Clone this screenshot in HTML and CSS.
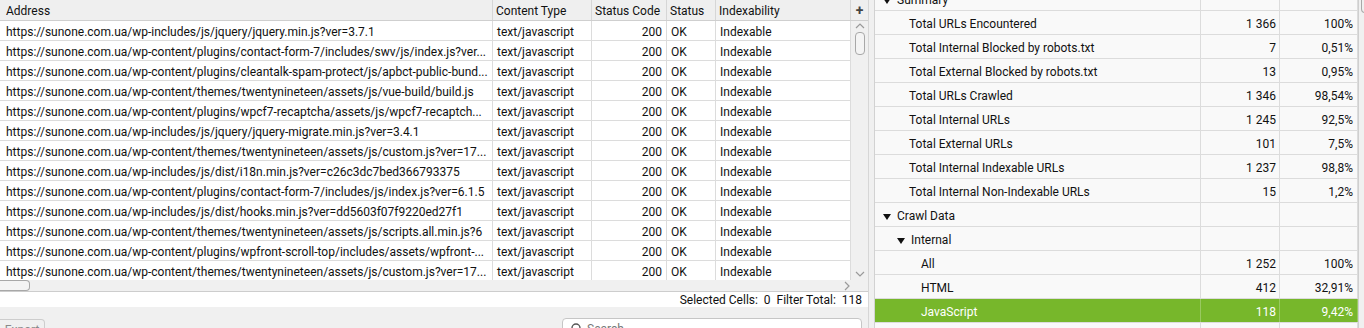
FILE: index.html
```html
<!DOCTYPE html>
<html lang="en">
<head>
  <meta charset="UTF-8">
  <title>Crawl results</title>
  <link rel="stylesheet" href="styles.css">
</head>
<body>
  <div class="app">
    <div class="left">
      <div class="grid-head">
        <div class="th">Address</div>
        <div class="th">Content Type</div>
        <div class="th">Status Code</div>
        <div class="th">Status</div>
        <div class="th">Indexability</div>
        <div class="th th-add">+</div>
      </div>

      <div class="grid-body">
        <div class="rows">
          <div class="row"><div class="td">https://sunone.com.ua/wp-includes/js/jquery/jquery.min.js?ver=3.7.1</div><div class="td">text/javascript</div><div class="td num">200</div><div class="td">OK</div><div class="td">Indexable</div></div>
          <div class="row"><div class="td">https://sunone.com.ua/wp-content/plugins/contact-form-7/includes/swv/js/index.js?ver...</div><div class="td">text/javascript</div><div class="td num">200</div><div class="td">OK</div><div class="td">Indexable</div></div>
          <div class="row"><div class="td">https://sunone.com.ua/wp-content/plugins/cleantalk-spam-protect/js/apbct-public-bund...</div><div class="td">text/javascript</div><div class="td num">200</div><div class="td">OK</div><div class="td">Indexable</div></div>
          <div class="row"><div class="td">https://sunone.com.ua/wp-content/themes/twentynineteen/assets/js/vue-build/build.js</div><div class="td">text/javascript</div><div class="td num">200</div><div class="td">OK</div><div class="td">Indexable</div></div>
          <div class="row"><div class="td">https://sunone.com.ua/wp-content/plugins/wpcf7-recaptcha/assets/js/wpcf7-recaptch...</div><div class="td">text/javascript</div><div class="td num">200</div><div class="td">OK</div><div class="td">Indexable</div></div>
          <div class="row"><div class="td">https://sunone.com.ua/wp-includes/js/jquery/jquery-migrate.min.js?ver=3.4.1</div><div class="td">text/javascript</div><div class="td num">200</div><div class="td">OK</div><div class="td">Indexable</div></div>
          <div class="row"><div class="td">https://sunone.com.ua/wp-content/themes/twentynineteen/assets/js/custom.js?ver=17...</div><div class="td">text/javascript</div><div class="td num">200</div><div class="td">OK</div><div class="td">Indexable</div></div>
          <div class="row"><div class="td">https://sunone.com.ua/wp-includes/js/dist/i18n.min.js?ver=c26c3dc7bed366793375</div><div class="td">text/javascript</div><div class="td num">200</div><div class="td">OK</div><div class="td">Indexable</div></div>
          <div class="row"><div class="td">https://sunone.com.ua/wp-content/plugins/contact-form-7/includes/js/index.js?ver=6.1.5</div><div class="td">text/javascript</div><div class="td num">200</div><div class="td">OK</div><div class="td">Indexable</div></div>
          <div class="row"><div class="td">https://sunone.com.ua/wp-includes/js/dist/hooks.min.js?ver=dd5603f07f9220ed27f1</div><div class="td">text/javascript</div><div class="td num">200</div><div class="td">OK</div><div class="td">Indexable</div></div>
          <div class="row"><div class="td">https://sunone.com.ua/wp-content/themes/twentynineteen/assets/js/scripts.all.min.js?6</div><div class="td">text/javascript</div><div class="td num">200</div><div class="td">OK</div><div class="td">Indexable</div></div>
          <div class="row"><div class="td">https://sunone.com.ua/wp-content/plugins/wpfront-scroll-top/includes/assets/wpfront-...</div><div class="td">text/javascript</div><div class="td num">200</div><div class="td">OK</div><div class="td">Indexable</div></div>
          <div class="row"><div class="td">https://sunone.com.ua/wp-content/themes/twentynineteen/assets/js/custom.js?ver=17...</div><div class="td">text/javascript</div><div class="td num">200</div><div class="td">OK</div><div class="td">Indexable</div></div>
        </div>
        <div class="vscroll">
          <svg class="chev" width="10" height="6" viewBox="0 0 10 6"><polyline points="1,5 5,1 9,5" fill="none" stroke="#9a9a9a" stroke-width="1.2"/></svg>
          <div class="vthumb"></div>
          <div class="vspace"></div>
          <svg class="chev" width="10" height="6" viewBox="0 0 10 6"><polyline points="1,1 5,5 9,1" fill="none" stroke="#9a9a9a" stroke-width="1.2"/></svg>
        </div>
      </div>

      <div class="hscroll">
        <div class="hthumb"></div>
        <svg class="chev-r" width="6" height="10" viewBox="0 0 6 10"><polyline points="1,1 5,5 1,9" fill="none" stroke="#9a9a9a" stroke-width="1.2"/></svg>
        <div class="corner"></div>
      </div>

      <div class="status-bar">Selected Cells:&nbsp; 0&nbsp; Filter Total:&nbsp; 118</div>

      <div class="bottom-bar">
        <button class="btn-export">Export</button>
        <div class="search">
          <svg width="12" height="12" viewBox="0 0 12 12"><circle cx="5" cy="5" r="4" fill="none" stroke="#555" stroke-width="1.4"/><line x1="8" y1="8" x2="11" y2="11" stroke="#555" stroke-width="1.4"/></svg>
          <span class="search-text">Search...</span>
          <span class="search-opt"></span>
        </div>
      </div>
    </div>

    <div class="splitter"></div>

    <div class="right">
      <div class="tree">
        <div class="trow">
          <div class="tc name lvl0"><svg class="tri" width="8" height="6" viewBox="0 0 8 6"><polygon points="0,0 8,0 4,6" fill="#111"/></svg>Summary</div>
          <div class="tc"></div><div class="tc"></div>
        </div>
        <div class="trow"><div class="tc name lvl1">Total URLs Encountered</div><div class="tc num">1 366</div><div class="tc num">100%</div></div>
        <div class="trow"><div class="tc name lvl1">Total Internal Blocked by robots.txt</div><div class="tc num">7</div><div class="tc num">0,51%</div></div>
        <div class="trow"><div class="tc name lvl1">Total External Blocked by robots.txt</div><div class="tc num">13</div><div class="tc num">0,95%</div></div>
        <div class="trow"><div class="tc name lvl1">Total URLs Crawled</div><div class="tc num">1 346</div><div class="tc num">98,54%</div></div>
        <div class="trow"><div class="tc name lvl1">Total Internal URLs</div><div class="tc num">1 245</div><div class="tc num">92,5%</div></div>
        <div class="trow"><div class="tc name lvl1">Total External URLs</div><div class="tc num">101</div><div class="tc num">7,5%</div></div>
        <div class="trow"><div class="tc name lvl1">Total Internal Indexable URLs</div><div class="tc num">1 237</div><div class="tc num">98,8%</div></div>
        <div class="trow"><div class="tc name lvl1">Total Internal Non-Indexable URLs</div><div class="tc num">15</div><div class="tc num">1,2%</div></div>
        <div class="trow">
          <div class="tc name lvl0"><svg class="tri" width="8" height="6" viewBox="0 0 8 6"><polygon points="0,0 8,0 4,6" fill="#111"/></svg>Crawl Data</div>
          <div class="tc"></div><div class="tc"></div>
        </div>
        <div class="trow">
          <div class="tc name lvl1a"><svg class="tri" width="8" height="6" viewBox="0 0 8 6"><polygon points="0,0 8,0 4,6" fill="#111"/></svg>Internal</div>
          <div class="tc"></div><div class="tc"></div>
        </div>
        <div class="trow"><div class="tc name lvl2">All</div><div class="tc num">1 252</div><div class="tc num">100%</div></div>
        <div class="trow"><div class="tc name lvl2">HTML</div><div class="tc num">412</div><div class="tc num">32,91%</div></div>
        <div class="trow selected"><div class="tc name lvl2">JavaScript</div><div class="tc num">118</div><div class="tc num">9,42%</div></div>
        <div class="trow"><div class="tc name lvl2"></div><div class="tc"></div><div class="tc"></div></div>
      </div>
      <div class="rscroll"><div class="rthumb"></div></div>
    </div>
  </div>
</body>
</html>
```

FILE: styles.css
```css
:root {
  --panel-bg: #f0f0f0;
  --line: #dcdcdc;
  --head-line: #cfcfcf;
  --text: #111;
  --green: #77b72b;
}

* {
  box-sizing: border-box;
  margin: 0;
  padding: 0;
}

body {
  font-family: Roboto, 'Liberation Sans', sans-serif;
  font-size: 12px;
  color: var(--text);
  background-color: var(--panel-bg);
  width: 1364px;
  height: 328px;
  overflow: hidden;
}

.app {
  display: flex;
  height: 328px;
}

/* left: url table */

.left {
  width: 868px;
  display: flex;
  flex-direction: column;
  flex-shrink: 0;
}

.grid-head,
.row {
  display: grid;
  grid-template-columns: 493px 99px 75px 49px 135px;
}

.grid-head {
  grid-template-columns: 493px 99px 75px 49px 135px 17px;
  height: 21px;
  background-color: #efefef;
  border-bottom: 1px solid var(--head-line);
}

.th {
  padding-left: 3px;
  padding-top: 3px;
  line-height: 17px;
  border-right: 1px solid #d6d6d6;
  white-space: nowrap;
  overflow: hidden;
}

.th:first-child {
  padding-left: 6px;
}

.th-add {
  border-right: none;
  text-align: center;
  font-weight: 700;
  font-size: 14px;
  color: #444;
  padding-left: 0;
  padding-top: 0;
  line-height: 20px;
}

.grid-body {
  display: flex;
  height: 259px;
  background-color: #fff;
}

.rows {
  width: 851px;
}

.row {
  height: 20px;
  border-bottom: 1px solid var(--line);
}

.td {
  padding: 3px 4px 0;
  line-height: 16px;
  border-right: 1px solid var(--line);
  white-space: nowrap;
  overflow: hidden;
  text-overflow: ellipsis;
}

.td:first-child {
  padding-left: 6px;
}

.td.num {
  text-align: right;
}

.vscroll {
  width: 17px;
  background-color: var(--panel-bg);
  display: flex;
  flex-direction: column;
  align-items: center;
  padding: 2px 0 3px;
}

.vthumb {
  width: 10px;
  height: 23px;
  margin-top: 3px;
  border: 1px solid #a8a8a8;
  border-radius: 4px;
  background-color: #f4f4f4;
}

.vspace {
  flex: 1;
}

.hscroll {
  height: 13px;
  display: flex;
  align-items: center;
  background-color: var(--panel-bg);
  border-bottom: 1px solid #cdcdcd;
}

.hthumb {
  width: 30px;
  height: 11px;
  border: 1px solid #a8a8a8;
  border-left: none;
  border-radius: 0 4px 4px 0;
  background-color: #f4f4f4;
}

.chev-r {
  margin-left: auto;
  margin-right: 1px;
}

.corner {
  width: 17px;
}

.status-bar {
  height: 15px;
  background-color: #fff;
  text-align: right;
  padding-right: 6px;
  padding-top: 2px;
  line-height: 13px;
  white-space: nowrap;
}

.bottom-bar {
  flex: 1;
  display: flex;
  align-items: flex-start;
  padding-top: 11px;
}

.btn-export {
  font-family: inherit;
  font-size: 12px;
  color: #8a8a8a;
  width: 45px;
  height: 22px;
  margin-top: 1px;
  border: 1px solid #cdcdcd;
  border-left: none;
  border-radius: 0 4px 4px 0;
  background-color: #f0f0f0;
}

.search {
  margin-left: 517px;
  width: 300px;
  height: 22px;
  display: flex;
  align-items: center;
  gap: 4px;
  padding: 0 8px;
  border: 1px solid #c6c6c6;
  border-radius: 4px;
  background-color: #fff;
}

.search-text {
  color: #777;
}

.search-opt {
  margin-left: auto;
  width: 12px;
  height: 3px;
  background-color: #666;
}

.splitter {
  width: 6px;
  flex-shrink: 0;
  background-color: var(--panel-bg);
  border-left: 1px solid #d6d6d6;
}

/* right: overview tree */

.right {
  flex: 1;
  display: flex;
  background-color: #f9f9f9;
  border-left: 1px solid #d2d2d2;
  overflow: hidden;
}

.tree {
  width: 483px;
  margin-top: -13px;
}

.trow {
  display: grid;
  grid-template-columns: 326px 79px 78px;
  height: 24px;
  border-bottom: 1px solid var(--line);
}

.tc {
  padding-top: 4px;
  line-height: 19px;
  border-right: 1px solid var(--line);
  white-space: nowrap;
  overflow: hidden;
}

.tc.num {
  text-align: right;
  padding-right: 3px;
}

.tc:last-child.num {
  padding-right: 4px;
}

.name {
  display: flex;
  align-items: center;
}

.tri {
  margin-right: 6px;
}

.lvl0 {
  padding-left: 8px;
}

.lvl1 {
  padding-left: 34px;
}

.lvl1a {
  padding-left: 22px;
}

.lvl2 {
  padding-left: 46px;
}

.trow.selected {
  background-color: var(--green);
  color: #fff;
}

.trow.selected .tc {
  border-right-color: rgba(255, 255, 255, 0.25);
}

.rscroll {
  flex: 1;
  background-color: #f0f0f0;
  border-left: 1px solid #cfcfcf;
}

.rthumb {
  width: 8px;
  height: 13px;
  margin-left: 2px;
  border: 1px solid #a8a8a8;
  border-top: none;
  border-radius: 0 0 4px 4px;
}
```
